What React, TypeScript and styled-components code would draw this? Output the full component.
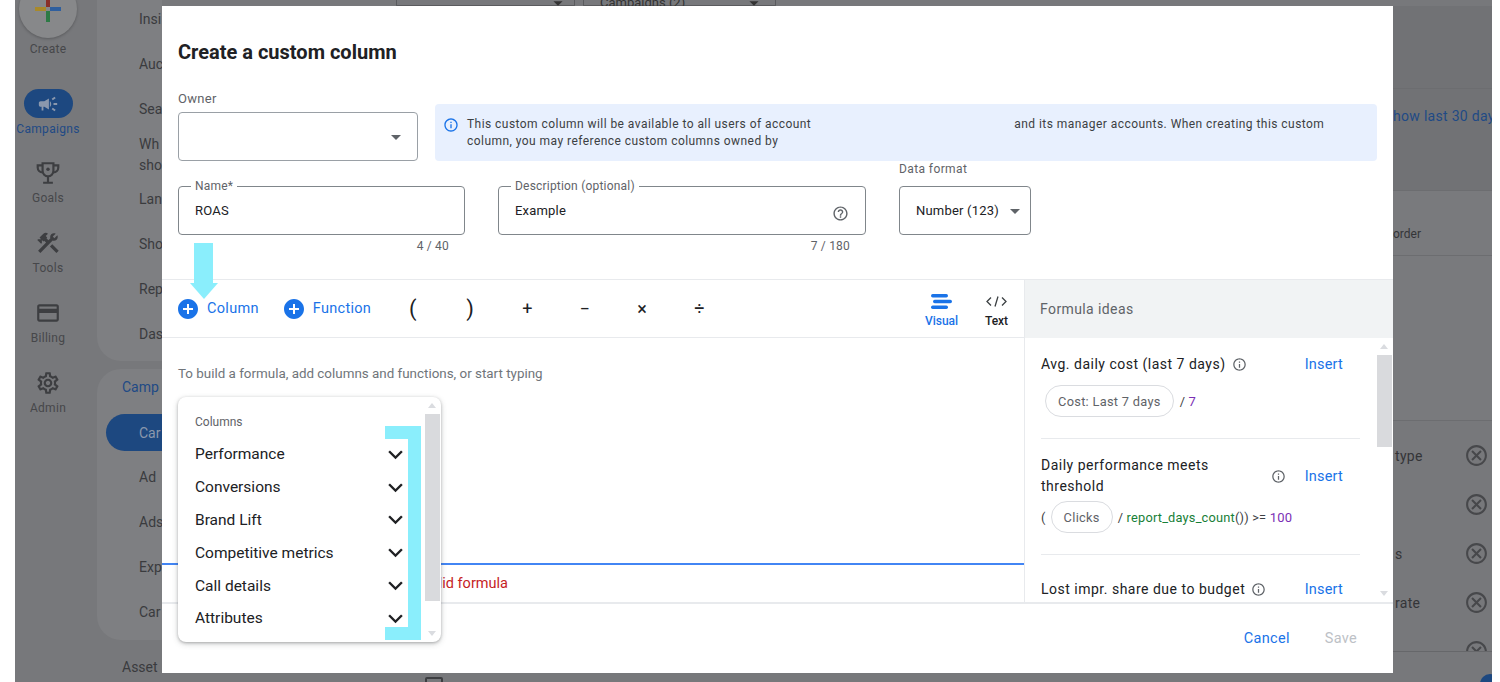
import styled, { createGlobalStyle } from "styled-components"
import {
  MdAddCircle,
  MdArrowDropDown,
  MdCampaign,
  MdConstruction,
  MdExpandMore,
  MdHelpOutline,
  MdInfoOutline,
  MdOutlineCancel,
  MdOutlineCreditCard,
  MdOutlineSettings,
} from "react-icons/md"

const navTop = ["Insi", "Auc", "Sea", "Wh\nsho", "Lan", "Sho", "Rep", "Das"]
const navBottom = ["Ad", "Ads", "Exp", "Car"]
const listRows = ["type", "", "s", "rate", ""]
const operators = ["(", ")", "+", "−", "×", "÷"]
const columnGroups = ["Performance", "Conversions", "Brand Lift", "Competitive metrics", "Call details", "Attributes"]

const App = () => {
  return (
    <>
      <GlobalStyle />
      <Page>
        <Backdrop>
          <Rail>
            <CreateCircle>
              <svg width="26" height="26" viewBox="0 0 26 26">
                <rect x="11" y="-6" width="4" height="17" fill="#8a2f28" />
                <rect x="15" y="11" width="12" height="4" fill="#2f5f9e" />
                <rect x="11" y="15" width="4" height="12" fill="#2d7a45" />
                <rect x="0" y="11" width="11" height="4" fill="#a8892a" />
              </svg>
            </CreateCircle>
            <RailLabel $first>Create</RailLabel>
            <RailItem $active>
              <ActivePill><MdCampaign size={22} /></ActivePill>
              <RailLabel $active>Campaigns</RailLabel>
            </RailItem>
            <RailItem>
              <svg width="26" height="26" viewBox="0 0 24 24" fill="none" stroke="currentColor" strokeWidth="2">
                <path d="M7 3h10v7a5 5 0 0 1-10 0z" />
                <path d="M7 5H2.5v2a4.5 4.5 0 0 0 4.5 4.5M17 5h4.5v2a4.5 4.5 0 0 1-4.5 4.5M12 15v5M7.5 21h9" />
                <circle cx="12" cy="8.5" r="1.6" fill="currentColor" stroke="none" />
              </svg>
              <RailLabel>Goals</RailLabel>
            </RailItem>
            <RailItem>
              <MdConstruction size={26} />
              <RailLabel>Tools</RailLabel>
            </RailItem>
            <RailItem>
              <MdOutlineCreditCard size={26} />
              <RailLabel>Billing</RailLabel>
            </RailItem>
            <RailItem>
              <MdOutlineSettings size={26} />
              <RailLabel>Admin</RailLabel>
            </RailItem>
          </Rail>

          <Nav>
            <NavCard $top>
              {navTop.map((item) => (
                <NavItem key={item}>{item}</NavItem>
              ))}
            </NavCard>
            <NavCard>
              <NavHeading>Camp</NavHeading>
              <NavPill>Car</NavPill>
              {navBottom.map((item) => (
                <NavItem key={item}>{item}</NavItem>
              ))}
            </NavCard>
            <NavFooter>Asset</NavFooter>
          </Nav>

          <Main>
            <TopFilters>
              <FilterBox $w={179} $pad={5}><MdArrowDropDown size={22} /></FilterBox>
              <FilterBox $w={193} $pad={10}>
                <FilterText>Campaigns (2)</FilterText>
                <MdArrowDropDown size={22} />
              </FilterBox>
            </TopFilters>
            <Band $h={83} />
            <Band $h={102}><DateLink>how last 30 days</DateLink></Band>
            <Band $h={65} $light><OrderText>order</OrderText></Band>
            <Band $h={165} $light />
            <ListRows>
              {listRows.map((row, i) => (
                <ListRow key={i}>
                  <span>{row}</span>
                  <MdOutlineCancel size={25} />
                </ListRow>
              ))}
            </ListRows>
            <BottomRow>
              <BottomCheck />
              <BottomToggle />
            </BottomRow>
          </Main>
        </Backdrop>

        <Dialog>
          <DialogTop>
            <Title>Create a custom column</Title>
            <OwnerRow>
              <OwnerColumn>
                <SmallLabel>Owner</SmallLabel>
                <OwnerSelect><MdArrowDropDown size={24} /></OwnerSelect>
              </OwnerColumn>
              <Banner>
                <MdInfoOutline size={16} color="#1a73e8" />
                <BannerText>
                  This custom column will be available to all users of account
                  <Redacted />
                  and its manager accounts. When creating this custom
                  <br />
                  column, you may reference custom columns owned by
                </BannerText>
              </Banner>
            </OwnerRow>
            <FieldRow>
              <FieldColumn $w={287}>
                <Outlined>
                  <legend>Name*</legend>
                  <FieldValue>ROAS</FieldValue>
                </Outlined>
                <Counter>4 / 40</Counter>
              </FieldColumn>
              <FieldColumn $w={368}>
                <Outlined>
                  <legend>Description (optional)</legend>
                  <FieldValue>Example</FieldValue>
                  <MdHelpOutline size={17} color="#5f6368" />
                </Outlined>
                <Counter>7 / 180</Counter>
              </FieldColumn>
              <FormatColumn>
                <FormatLabel>Data format</FormatLabel>
                <FormatSelect>
                  Number (123)
                  <MdArrowDropDown size={24} color="#5f6368" />
                </FormatSelect>
              </FormatColumn>
            </FieldRow>
          </DialogTop>

          <Workspace>
            <EditorPane>
              <Toolbar>
                <AddButton><MdAddCircle size={24} />Column</AddButton>
                <AddButton><MdAddCircle size={24} />Function</AddButton>
                <Operators>
                  {operators.map((op) => (
                    <Operator key={op} $big={op === "(" || op === ")"}>{op}</Operator>
                  ))}
                </Operators>
                <ViewTabs>
                  <ViewTab $active>
                    <svg width="21" height="15" viewBox="0 0 21 15">
                      <rect x="0" y="0" width="17" height="3.4" rx="1.7" fill="#1a73e8" />
                      <rect x="2" y="5.8" width="19" height="3.4" rx="1.7" fill="#1a73e8" />
                      <rect x="0" y="11.6" width="17" height="3.4" rx="1.7" fill="#1a73e8" />
                    </svg>
                    Visual
                  </ViewTab>
                  <ViewTab>
                    <svg width="21" height="15" viewBox="0 0 21 15" fill="none" stroke="#3c4043" strokeWidth="1.3">
                      <path d="M5 3.5L1 7.5L5 11.5M16 3.5L20 7.5L16 11.5M12 2.5L9 12.5" />
                    </svg>
                    Text
                  </ViewTab>
                </ViewTabs>
              </Toolbar>
              <EditorBody>To build a formula, add columns and functions, or start typing</EditorBody>
              <ErrorRow>Invalid formula</ErrorRow>
            </EditorPane>

            <IdeasPane>
              <IdeasHeader>Formula ideas</IdeasHeader>
              <IdeasList>
                <Idea>
                  <IdeaHead>
                    <IdeaTitle>Avg. daily cost (last 7 days)</IdeaTitle>
                    <MdInfoOutline size={15} color="#5f6368" />
                    <InsertLink>Insert</InsertLink>
                  </IdeaHead>
                  <Formula>
                    <Chip>Cost: Last 7 days</Chip>
                    <span>/ <Num>7</Num></span>
                  </Formula>
                </Idea>
                <Idea>
                  <IdeaHead>
                    <IdeaTitle $wrap>Daily performance meets threshold</IdeaTitle>
                    <MdInfoOutline size={15} color="#5f6368" />
                    <InsertLink>Insert</InsertLink>
                  </IdeaHead>
                  <Formula $tight>
                    <span>(</span>
                    <Chip>Clicks</Chip>
                    <span>/ <Fn>report_days_count</Fn>()) &gt;= <Num>100</Num></span>
                  </Formula>
                </Idea>
                <Idea $last>
                  <IdeaHead>
                    <IdeaTitle>Lost impr. share due to budget</IdeaTitle>
                    <MdInfoOutline size={15} color="#5f6368" />
                    <InsertLink>Insert</InsertLink>
                  </IdeaHead>
                </Idea>
              </IdeasList>
              <ScrollTrack $arrowTop={64} $thumbTop={75} $thumbHeight={92}>
                <ScrollDown $bottom={6} />
              </ScrollTrack>
            </IdeasPane>
          </Workspace>

          <Footer>
            <FooterButton>Cancel</FooterButton>
            <FooterButton $disabled>Save</FooterButton>
          </Footer>

          <ColumnsMenu>
            <MenuHeading>Columns</MenuHeading>
            {columnGroups.map((group) => (
              <MenuRow key={group}>
                {group}
                <MdExpandMore size={29} />
              </MenuRow>
            ))}
            <ScrollTrack $arrowTop={6} $thumbTop={17} $thumbHeight={187}>
              <ScrollDown $bottom={6} />
            </ScrollTrack>
          </ColumnsMenu>

          <ArrowMark width="28" height="56" viewBox="0 0 28 56">
            <path d="M4 0H23V40H28L14 56L0 40H4Z" fill="#8aeefc" />
          </ArrowMark>
          <BracketMark />
        </Dialog>
      </Page>
    </>
  )
}

export default App

const GlobalStyle = createGlobalStyle`
  * {
    box-sizing: border-box;
  }
  html, body {
    margin: 0;
    padding: 0;
    background: #fff;
  }
  body {
    font-family: Roboto, "Liberation Sans", sans-serif;
  }
`

const Page = styled.div`
  position: relative;
  width: 1500px;
  height: 682px;
  padding: 0 8px 0 15px;
  background: #fff;
  overflow: hidden;
`
const Backdrop = styled.div`
  display: flex;
  height: 100%;
  background: #77787b;
  overflow: hidden;
`

const Rail = styled.div`
  width: 82px;
  flex-shrink: 0;
  padding-right: 16px;
  display: flex;
  flex-direction: column;
  align-items: center;
  color: #3d3e41;
`
const CreateCircle = styled.div`
  width: 58px;
  height: 58px;
  margin-top: -20px;
  flex-shrink: 0;
  border-radius: 50%;
  background: #87888a;
  box-shadow: 0 1px 3px rgba(0, 0, 0, 0.25);
  display: flex;
  align-items: center;
  justify-content: center;
`
const RailItem = styled.div<{ $active?: boolean }>`
  height: 70px;
  flex-shrink: 0;
  display: flex;
  flex-direction: column;
  align-items: center;
  padding-top: ${(p) => (p.$active ? "0" : "1px")};
`
const ActivePill = styled.div`
  width: 49px;
  height: 29px;
  border-radius: 15px;
  background: #1d4880;
  color: #8b98ad;
  display: flex;
  align-items: center;
  justify-content: center;
`
const RailLabel = styled.div<{ $active?: boolean; $first?: boolean }>`
  font-size: 12px;
  line-height: 16px;
  letter-spacing: 0.3px;
  margin-top: ${(p) => (p.$first || p.$active ? "3px" : "4px")};
  margin-bottom: ${(p) => (p.$first ? "32px" : "0")};
  color: ${(p) => (p.$active ? "#1f4a85" : "#46474a")};
`

const Nav = styled.div`
  width: 65px;
  flex-shrink: 0;
  display: flex;
  flex-direction: column;
  gap: 8px;
  color: #3a3b3e;
  font-size: 14px;
`
const NavCard = styled.div<{ $top?: boolean }>`
  width: 100%;
  height: ${(p) => (p.$top ? "361px" : "271px")};
  flex-shrink: 0;
  padding-top: ${(p) => (p.$top ? "0" : "5px")};
  background: #7e7f82;
  border-radius: ${(p) => (p.$top ? "0 0 0 24px" : "24px 0 0 24px")};
  display: flex;
  flex-direction: column;
  justify-content: ${(p) => (p.$top ? "flex-end" : "flex-start")};
  padding-bottom: ${(p) => (p.$top ? "4px" : "0")};
  overflow: hidden;
`
const NavItem = styled.div`
  height: 45px;
  flex-shrink: 0;
  padding-left: 42px;
  display: flex;
  align-items: center;
  line-height: 21px;
  white-space: pre-line;
`
const NavHeading = styled.div`
  height: 26px;
  flex-shrink: 0;
  padding-left: 25px;
  display: flex;
  align-items: center;
  color: #1f4a85;
`
const NavPill = styled.div`
  height: 37px;
  margin: 14px 0 4px 9px;
  flex-shrink: 0;
  padding-left: 33px;
  display: flex;
  align-items: center;
  background: #1d4880;
  border-radius: 19px 0 0 19px;
  color: #8b98ad;
`
const NavFooter = styled.div`
  padding: 9px 0 0 25px;
  line-height: 20px;
`

const Main = styled.div`
  flex: 1;
  min-width: 0;
  display: flex;
  flex-direction: column;
  color: #343538;
  font-size: 14px;
`
const TopFilters = styled.div`
  height: 6px;
  flex-shrink: 0;
  padding-left: 234px;
  display: flex;
  gap: 8px;
  overflow: hidden;
`
const FilterBox = styled.div<{ $w: number; $pad: number }>`
  width: ${(p) => p.$w}px;
  height: 6px;
  padding-right: ${(p) => p.$pad}px;
  border: 1px solid #5a5b5e;
  border-top: none;
  display: flex;
  align-items: center;
  justify-content: flex-end;
  color: #333;
`
const FilterText = styled.span`
  margin-right: auto;
  padding-left: 16px;
  font-size: 13px;
`
const Band = styled.div<{ $h: number; $light?: boolean }>`
  height: ${(p) => p.$h}px;
  flex-shrink: 0;
  padding-left: 1231px;
  background: ${(p) => (p.$light ? "#797a7d" : "#717275")};
  border-bottom: 1px solid #6c6d70;
  white-space: nowrap;
  overflow: hidden;
`
const DateLink = styled.div`
  padding-top: 17px;
  line-height: 20px;
  color: #1f4a85;
  font-size: 14px;
  letter-spacing: 0.3px;
`
const OrderText = styled.div`
  padding-top: 35px;
  font-size: 12px;
  line-height: 16px;
`
const ListRows = styled.div`
  height: 231px;
  flex-shrink: 0;
  padding-top: 10px;
  border-bottom: 1px solid #66676a;
  overflow: hidden;
`
const ListRow = styled.div`
  height: 49px;
  padding: 0 3px 0 1233px;
  display: flex;
  align-items: center;
  justify-content: space-between;
  font-size: 14px;
  letter-spacing: 0.3px;
  svg {
    color: #47484b;
  }
`
const BottomRow = styled.div`
  flex: 1;
  position: relative;
`
const BottomCheck = styled.div`
  position: absolute;
  left: 263px;
  top: 25px;
  width: 18px;
  height: 18px;
  border: 2px solid #3d3e41;
  border-radius: 2px;
`
const BottomToggle = styled.div`
  position: absolute;
  right: -8px;
  bottom: -12px;
  width: 20px;
  height: 20px;
  border-radius: 50%;
  background: #1d4880;
`

const Dialog = styled.div`
  position: absolute;
  left: 162px;
  top: 6px;
  width: 1231px;
  height: 667px;
  background: #fff;
  display: flex;
  flex-direction: column;
  color: #202124;
`
const DialogTop = styled.div`
  height: 273px;
  flex-shrink: 0;
  padding: 33px 16px 0;
`
const Title = styled.div`
  font-size: 20px;
  line-height: 26px;
  font-weight: 700;
`
const OwnerRow = styled.div`
  display: flex;
  align-items: flex-end;
  gap: 17px;
  margin-top: 26px;
`
const OwnerColumn = styled.div`
  width: 240px;
  flex-shrink: 0;
`
const SmallLabel = styled.div`
  font-size: 13px;
  line-height: 16px;
  letter-spacing: 0.3px;
  color: #5f6368;
  margin-bottom: 5px;
`
const OwnerSelect = styled.div`
  height: 49px;
  padding-right: 9px;
  border: 1px solid #9aa0a6;
  border-radius: 4px;
  display: flex;
  align-items: center;
  justify-content: flex-end;
  color: #5f6368;
`
const Banner = styled.div`
  width: 942px;
  height: 57px;
  padding: 12px 8px 0 8px;
  background: #e8f0fe;
  border-radius: 4px;
  display: flex;
  gap: 8px;
  svg {
    flex-shrink: 0;
    margin-top: 1px;
  }
`
const BannerText = styled.div`
  font-size: 12px;
  line-height: 16.5px;
  letter-spacing: 0.45px;
  color: #3c4043;
  white-space: nowrap;
`
const Redacted = styled.span`
  display: inline-block;
  width: 203px;
`
const FieldRow = styled.div`
  display: flex;
  align-items: flex-start;
  gap: 33px;
`
const FieldColumn = styled.div<{ $w: number }>`
  width: ${(p) => p.$w}px;
  flex-shrink: 0;
  padding-top: 25px;
`
const Outlined = styled.fieldset`
  height: 55px;
  margin: -6px 0 0;
  padding: 0 16px;
  border: 1px solid #80868b;
  border-radius: 4px;
  display: flex;
  align-items: center;
  justify-content: space-between;
  legend {
    padding: 0 4px;
    margin-left: -4px;
    font-size: 12px;
    line-height: 12px;
    letter-spacing: 0.2px;
    color: #5f6368;
  }
`
const FieldValue = styled.div`
  font-size: 13px;
  line-height: 18px;
  letter-spacing: 0.2px;
  color: #202124;
  margin-top: -5px;
`
const Counter = styled.div`
  padding: 4px 16px 0 0;
  text-align: right;
  font-size: 12px;
  line-height: 14px;
  letter-spacing: 0.2px;
  color: #5f6368;
`
const FormatColumn = styled.div`
  width: 132px;
  flex-shrink: 0;
`
const FormatLabel = styled.div`
  font-size: 12px;
  line-height: 16px;
  letter-spacing: 0.4px;
  color: #5f6368;
  margin-bottom: 9px;
`
const FormatSelect = styled.div`
  height: 49px;
  padding: 0 3px 0 16px;
  border: 1px solid #80868b;
  border-radius: 4px;
  display: flex;
  align-items: center;
  justify-content: space-between;
  font-size: 13px;
  letter-spacing: 0.2px;
  white-space: nowrap;
`

const Workspace = styled.div`
  flex: 1;
  min-height: 0;
  display: flex;
  border-top: 1px solid #e8eaed;
`
const EditorPane = styled.div`
  width: 862px;
  flex-shrink: 0;
  display: flex;
  flex-direction: column;
`
const Toolbar = styled.div`
  height: 58px;
  flex-shrink: 0;
  padding-left: 14px;
  display: flex;
  align-items: center;
  border-bottom: 1px solid #e8eaed;
`
const AddButton = styled.div`
  display: flex;
  align-items: center;
  gap: 7px;
  margin-right: 23px;
  font-size: 14.5px;
  color: #1a73e8;
  letter-spacing: 0.3px;
  svg {
    flex-shrink: 0;
  }
`
const Operators = styled.div`
  display: flex;
  margin-left: -10px;
`
const Operator = styled.div<{ $big?: boolean }>`
  width: 57.3px;
  text-align: center;
  color: #202124;
  font-size: ${(p) => (p.$big ? "22px" : "18px")};
  line-height: 24px;
`
const ViewTabs = styled.div`
  display: flex;
  margin-left: auto;
`
const ViewTab = styled.div<{ $active?: boolean }>`
  width: 55px;
  height: 38px;
  padding-top: 4px;
  display: flex;
  flex-direction: column;
  align-items: center;
  justify-content: space-between;
  font-size: 12px;
  font-weight: 500;
  color: ${(p) => (p.$active ? "#1a73e8" : "#202124")};
`
const EditorBody = styled.div`
  flex: 1;
  padding: 26px 16px 0;
  font-size: 13.4px;
  line-height: 20px;
  color: #70757a;
`
const ErrorRow = styled.div`
  height: 39px;
  flex-shrink: 0;
  padding: 9px 0 0 250px;
  border-top: 2px solid #4285f4;
  font-size: 14.5px;
  line-height: 20px;
  color: #c5221f;
`

const IdeasPane = styled.div`
  flex: 1;
  min-width: 0;
  position: relative;
  display: flex;
  flex-direction: column;
  border-left: 1px solid #e8eaed;
  overflow: hidden;
`
const IdeasHeader = styled.div`
  height: 58px;
  flex-shrink: 0;
  padding-left: 15px;
  display: flex;
  align-items: center;
  background: #f1f3f4;
  font-size: 14px;
  letter-spacing: 0.4px;
  color: #5f6368;
`
const IdeasList = styled.div`
  flex: 1;
  min-height: 0;
  width: 335px;
  padding-left: 16px;
  overflow: hidden;
`
const Idea = styled.div<{ $last?: boolean }>`
  padding-top: ${(p) => (p.$last ? "24px" : "16px")};
  padding-bottom: 21px;
  border-bottom: ${(p) => (p.$last ? "none" : "1px solid #e8eaed")};
`
const IdeaHead = styled.div`
  display: flex;
  align-items: center;
  gap: 6px;
`
const IdeaTitle = styled.div<{ $wrap?: boolean }>`
  font-size: 14px;
  line-height: 21px;
  letter-spacing: 0.5px;
  color: #202124;
  width: ${(p) => (p.$wrap ? "224px" : "auto")};
  white-space: ${(p) => (p.$wrap ? "normal" : "nowrap")};
`
const InsertLink = styled.div`
  margin-left: auto;
  margin-right: 17px;
  font-size: 14.5px;
  color: #1a73e8;
  letter-spacing: 0.2px;
`
const Formula = styled.div<{ $tight?: boolean }>`
  margin-top: ${(p) => (p.$tight ? "4px" : "10px")};
  margin-left: ${(p) => (p.$tight ? "0" : "4px")};
  display: flex;
  align-items: center;
  gap: ${(p) => (p.$tight ? "5px" : "6px")};
  font-size: 12.8px;
  letter-spacing: 0.2px;
  color: #3c4043;
`
const Chip = styled.div`
  height: 32px;
  padding: 0 12px;
  border: 1px solid #dadce0;
  border-radius: 16px;
  display: flex;
  align-items: center;
  font-size: 12.8px;
  letter-spacing: 0.3px;
  color: #5f6368;
`
const Num = styled.span`
  color: #7b2fb5;
  font-size: 13px;
`
const Fn = styled.span`
  color: #188038;
`

const Footer = styled.div`
  height: 71px;
  flex-shrink: 0;
  padding: 0 36px 0 0;
  border-top: 2px solid #e8eaed;
  display: flex;
  align-items: center;
  justify-content: flex-end;
  gap: 35px;
`
const FooterButton = styled.div<{ $disabled?: boolean }>`
  font-size: 14.5px;
  letter-spacing: 0.3px;
  color: ${(p) => (p.$disabled ? "#bdc1c6" : "#1a73e8")};
`

const ColumnsMenu = styled.div`
  position: absolute;
  left: 16px;
  top: 391px;
  width: 263px;
  height: 245px;
  padding: 17px 0 0 17px;
  background: #fff;
  border-radius: 8px;
  box-shadow: 0 1px 3px rgba(60, 64, 67, 0.35), 0 2px 6px rgba(60, 64, 67, 0.2);
`
const MenuHeading = styled.div`
  height: 16px;
  margin-bottom: 8px;
  font-size: 12px;
  line-height: 16px;
  color: #5f6368;
`
const MenuRow = styled.div`
  width: 215px;
  height: 32.8px;
  display: flex;
  align-items: center;
  justify-content: space-between;
  font-size: 15.5px;
  color: #202124;
  svg {
    flex-shrink: 0;
  }
`
const ScrollTrack = styled.div<{ $arrowTop: number; $thumbTop: number; $thumbHeight: number }>`
  position: absolute;
  right: 1px;
  top: 0;
  bottom: 0;
  width: 15px;
  &::before {
    content: "";
    position: absolute;
    left: 3px;
    top: ${(p) => p.$arrowTop}px;
    border: 4px solid transparent;
    border-top: none;
    border-bottom: 5px solid #dadce0;
  }
  &::after {
    content: "";
    position: absolute;
    left: 0;
    right: 0;
    top: ${(p) => p.$thumbTop}px;
    height: ${(p) => p.$thumbHeight}px;
    background: #d9dadd;
  }
`
const ScrollDown = styled.div<{ $bottom: number }>`
  position: absolute;
  left: 3px;
  bottom: ${(p) => p.$bottom}px;
  border: 4px solid transparent;
  border-bottom: none;
  border-top: 5px solid #dadce0;
`

const ArrowMark = styled.svg`
  position: absolute;
  left: 28px;
  top: 237px;
`
const BracketMark = styled.div`
  position: absolute;
  left: 223px;
  top: 420px;
  width: 36px;
  height: 214px;
  border: 13px solid #8aeefc;
  border-left: none;
`
